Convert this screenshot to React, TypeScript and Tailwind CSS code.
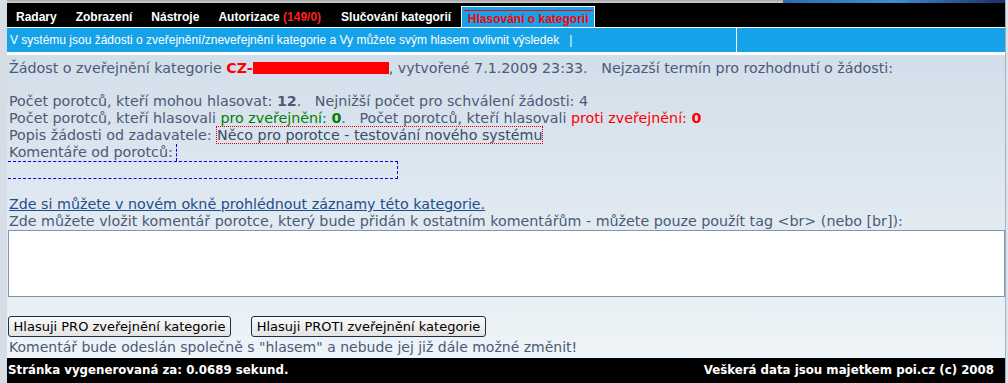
const navItems = ['Radary', 'Zobrazení', 'Nástroje'];

export default function App() {
  return (
    <div className="w-[1008px] h-[383px] overflow-hidden bg-[#dde3ec] flex font-['DejaVu_Sans',sans-serif]">
      <div className="w-[7px] shrink-0 bg-[#d6dde7]" />
      <div className="w-[998px] shrink-0 flex flex-col">
        {/* horni prouzek z hlavicky */}
        <div className="h-[3px] flex">
          <div className="flex-1 bg-gradient-to-b from-[#a9a9a9] to-[#d2d2d2]" />
          <div className="w-[222px] bg-gradient-to-r from-[#2a6ea8] via-[#3f8ed0] to-[#1b2f66]" />
        </div>

        {/* menu */}
        <nav className="h-[24px] bg-black flex items-end pl-[9px] font-['Liberation_Sans',Arial,sans-serif] text-[12px] font-bold text-white">
          {navItems.map((item) => (
            <span key={item} className="h-[21px] flex items-center mr-[19px]">{item}</span>
          ))}
          <span className="h-[21px] flex items-center mr-[20px]">
            Autorizace&nbsp;<span className="text-[#ff2020]">(149/0)</span>
          </span>
          <span className="h-[21px] flex items-center">Slučování kategorií</span>
          <span className="h-[21px] ml-[10px] w-[134px] bg-[#15a2e8] border-l border-t border-r border-white flex items-start justify-center pt-[3px]">
            <span className="border-t border-[#ff0000] px-[4px] pt-px leading-[14px] text-[#ff0000]">Hlasování o kategorii</span>
          </span>
        </nav>
        <div className="h-px bg-white" />

        {/* informacni lista */}
        <div className="h-[24px] flex font-['Liberation_Sans',Arial,sans-serif] text-[12px] text-white">
          <div className="w-[729px] bg-[#15a2e8] flex items-center pl-[3px] whitespace-pre">
            V systému jsou žádosti o zveřejnění/zneveřejnění kategorie a Vy můžete svým hlasem ovlivnit výsledek   |
          </div>
          <div className="w-px bg-white" />
          <div className="flex-1 bg-[#15a2e8]" />
        </div>
        <div className="h-[3px] bg-white" />

        {/* obsah */}
        <div className="flex-1 bg-gradient-to-b from-[#d2deea] to-[#eef4f7] pl-px pt-[5px] text-[14.25px] leading-[17px] text-[#4b5a77]">
          <div className="pl-px whitespace-pre">
            Žádost o zveřejnění kategorie <b className="text-[#ff0000]">CZ-</b>
            <span className="inline-block w-[136px] h-[12px] bg-[#ff0000] align-[-1px]" />
            , vytvořené 7.1.2009 23:33.   Nejzazší termín pro rozhodnutí o žádosti:
          </div>
          <div className="h-[16px]" />
          <div className="pl-px whitespace-pre">
            Počet porotců, kteří mohou hlasovat: <b>12</b>.   Nejnižší počet pro schválení žádosti: 4
          </div>
          <div className="pl-px whitespace-pre">
            Počet porotců, kteří hlasovali <span className="text-[#008000]">pro zveřejnění: <b>0</b></span>.   Počet porotců, kteří hlasovali <span className="text-[#ff0000]">proti zveřejnění: <b>0</b></span>
          </div>
          <div className="pl-px">
            Popis žádosti od zadavatele:{' '}
            <span className="border border-dotted border-[#e00000] text-[#3c4a66]">Něco pro porotce - testování nového systému</span>
          </div>
          <div className="pl-px flex items-end">
            <span>Komentáře od porotců:</span>
            <span className="inline-block h-[17px] ml-[3px] border-l border-dashed border-[#0000ee]" />
          </div>
          <div className="w-[390px] h-[18px] border-t border-r border-b border-dashed border-[#0000ee]" />
          <div className="h-[17px]" />
          <a href="#" className="pl-px text-[#1f4d8b] underline">Zde si můžete v novém okně prohlédnout záznamy této kategorie.</a>
          <div className="pl-px">
            Zde můžete vložit komentář porotce, který bude přidán k ostatním komentářům - můžete pouze použít tag &lt;br&gt; (nebo [br]):
          </div>
          <textarea className="block w-[997px] h-[67px] bg-white border border-[#7f96b2] resize-none outline-none" />
          <div className="flex gap-[20px] mt-[19px] text-[13px] text-black">
            <button className="w-[223px] h-[21px] rounded-[3px] border border-[#1d2f4c] bg-gradient-to-b from-[#fbfbfb] to-[#e3e3e3] leading-[19px]">
              Hlasuji PRO zveřejnění kategorie
            </button>
            <button className="w-[235px] h-[21px] rounded-[3px] border border-[#1d2f4c] bg-gradient-to-b from-[#fbfbfb] to-[#e3e3e3] leading-[19px]">
              Hlasuji PROTI zveřejnění kategorie
            </button>
          </div>
          <div className="pl-px mt-[2px] text-[14px]">
            Komentář bude odeslán společně s "hlasem" a nebude jej již dále možné změnit!
          </div>
        </div>

        {/* paticka */}
        <footer className="h-[25px] shrink-0 bg-black flex items-center justify-between pl-px pr-[11px] text-[11.8px] font-bold text-white">
          <span>Stránka vygenerovaná za: 0.0689 sekund.</span>
          <span>Veškerá data jsou majetkem poi.cz (c) 2008</span>
        </footer>
      </div>
      <div className="w-px shrink-0 bg-[#a7b1be]" />
      <div className="flex-1 bg-[#dfe4ea]" />
    </div>
  );
}
